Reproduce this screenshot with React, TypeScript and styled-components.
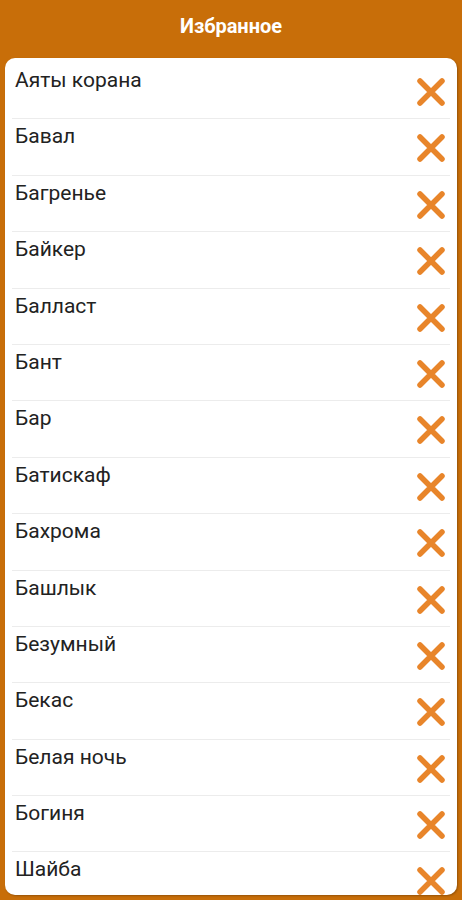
import styled, { createGlobalStyle } from "styled-components";

const items = [
  "Аяты корана",
  "Бавал",
  "Багренье",
  "Байкер",
  "Балласт",
  "Бант",
  "Бар",
  "Батискаф",
  "Бахрома",
  "Башлык",
  "Безумный",
  "Бекас",
  "Белая ночь",
  "Богиня",
  "Шайба",
];

const GlobalStyle = createGlobalStyle`
  html, body {
    margin: 0;
    padding: 0;
    height: 900px;
    overflow: hidden;
    background: #c86e09;
  }
  #root {
    height: 900px;
  }
`;

const Page = styled.div`
  display: flex;
  flex-direction: column;
  height: 900px;
  background: #c86e09;
  font-family: Roboto, "Noto Sans", sans-serif;
`;

const Header = styled.header`
  height: 58px;
  display: flex;
  align-items: center;
  justify-content: center;
  color: #fff;
  font-size: 20px;
  font-weight: 700;
  flex-shrink: 0;
  padding-bottom: 6px;
  box-sizing: border-box;
`;

const Card = styled.div`
  flex: 1;
  margin: 0 5px 5px 5px;
  background: #fff;
  border-radius: 10px;
  overflow: hidden;
  padding: 5px 7px 0 7px;
  box-shadow: 1px 1px 2px rgba(0, 0, 0, 0.25);
`;

const Row = styled.div`
  height: 56.4px;
  box-sizing: border-box;
  display: flex;
  justify-content: space-between;
  border-bottom: 1px solid #ececec;
`;

const Label = styled.span`
  padding: 5px 0 0 3px;
  font-size: 21px;
  line-height: 24px;
  color: #222;
`;

const RemoveButton = styled.button`
  border: none;
  background: none;
  padding: 0;
  margin: 14px 4px 0 0;
  width: 30px;
  height: 30px;
  align-self: flex-start;
  display: flex;
  align-items: center;
  justify-content: center;
  cursor: pointer;
`;

function CrossIcon() {
  return (
    <svg width="30" height="28" viewBox="0 0 30 28">
      <path
        d="M4 3 L26 25 M26 3 L4 25"
        stroke="#e8852a"
        strokeWidth="5.5"
        strokeLinecap="round"
        fill="none"
      />
    </svg>
  );
}

export default function App() {
  return (
    <Page>
      <GlobalStyle />
      <Header>Избранное</Header>
      <Card>
        {items.map((item) => (
          <Row key={item}>
            <Label>{item}</Label>
            <RemoveButton aria-label="Удалить">
              <CrossIcon />
            </RemoveButton>
          </Row>
        ))}
      </Card>
    </Page>
  );
}
